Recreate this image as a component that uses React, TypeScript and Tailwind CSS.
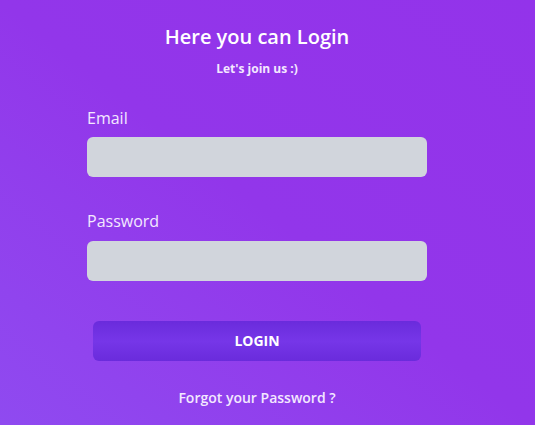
export default function App() {
  return (
    <div
      className="min-h-screen w-full bg-gradient-to-tr from-[#8f4af0] via-[#9236ea] to-[#9333ea] pt-[23px]"
      style={{ fontFamily: '"Open Sans", "Noto Sans", sans-serif' }}
    >
      <div className="ml-[87px] flex w-[340px] flex-col">
        <h1 className="text-center text-xl leading-7 font-semibold text-white">Here you can Login</h1>
        <p className="mt-[10px] text-center text-xs leading-4 font-bold text-[#f3e8ff]">Let's join us :)</p>

        <label className="mt-[29px] text-base leading-6 text-[#f3e8ff]">Email</label>
        <input type="email" className="mt-[7px] h-10 w-full rounded-md bg-gray-300 px-3 outline-none" />

        <label className="mt-[32px] text-base leading-6 text-[#f3e8ff]">Password</label>
        <input type="password" className="mt-[8px] h-10 w-full rounded-md bg-gray-300 px-3 outline-none" />

        <button className="mx-1.5 mt-10 h-10 rounded-md bg-gradient-to-b from-[#6a2bdc] via-[#7636e8] to-[#6a2bdc] text-sm font-bold text-white">
          LOGIN
        </button>

        <a href="#" className="mt-[27px] text-center text-sm leading-5 font-semibold text-[#f3e8ff]">
          Forgot your Password ?
        </a>
      </div>
    </div>
  )
}
